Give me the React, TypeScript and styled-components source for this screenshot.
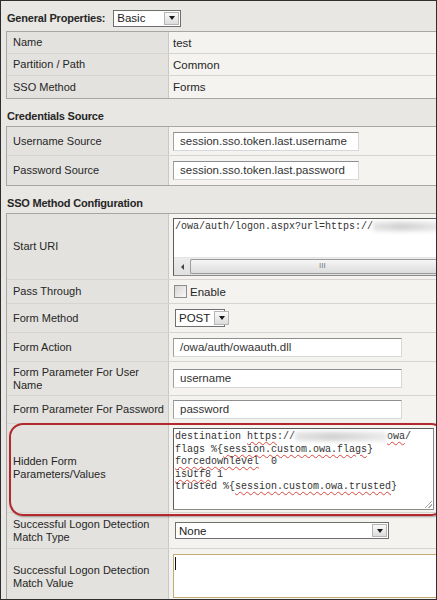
import styled, { createGlobalStyle } from "styled-components";

const GlobalStyle = createGlobalStyle`
    html, body {
        margin: 0;
        padding: 0;
        background: #e8e7e3;
    }
`;

const Frame = styled.div`
    width: 437px;
    height: 600px;
    box-sizing: border-box;
    border: 1px solid #2e2e2e;
    background: #e8e7e3;
    overflow: hidden;
    padding: 0 0 0 5px;
    font-family: "Liberation Sans", Arial, sans-serif;
    font-size: 11px;
    color: #262626;
`;

const TopBar = styled.div`
    display: flex;
    align-items: center;
    gap: 6px;
    height: 18px;
    margin: 8px 0 4px 1px;
    font-weight: bold;
    font-size: 11px;
    letter-spacing: -0.2px;
`;

const Heading = styled.div`
    font-weight: bold;
    line-height: 14px;
    letter-spacing: -0.2px;
    padding: 10px 0 3px 1px;
`;

const Table = styled.div`
    width: 429px;
    border: 1px solid #a7a6a3;
    position: relative;
`;

const Row = styled.div<{ $h: number }>`
    display: grid;
    grid-template-columns: 162px 1fr;
    height: ${(p) => p.$h}px;
    box-sizing: border-box;
    border-bottom: 1px solid #d6d5d1;

    &:last-child {
        border-bottom: none;
    }
`;

const Label = styled.div`
    display: flex;
    align-items: center;
    padding: 0 2px 0 6px;
    background: #e3e2de;
    border-right: 1px solid #c9c8c4;
    line-height: 13px;
    font-size: 11px;
`;

const Value = styled.div<{ $top?: number }>`
    display: flex;
    align-items: ${(p) => (p.$top !== undefined ? "flex-start" : "center")};
    padding: ${(p) => (p.$top !== undefined ? `${p.$top}px 0 0 4px` : "0 0 0 4px")};
    background: #f4f3f0;
    min-width: 0;
    overflow: hidden;
    font-size: 11.5px;
`;

const TextInput = styled.div<{ $w: number }>`
    width: ${(p) => p.$w}px;
    height: 19px;
    box-sizing: border-box;
    border: 1px solid #d8d8d8;
    border-top-color: #8e8e8e;
    border-left-color: #a0a0a0;
    background: #fff;
    padding: 0 6px;
    line-height: 17px;
    color: #333;
    white-space: nowrap;
`;

const SelectBox = styled.div<{ $w: number; $h: number }>`
    width: ${(p) => p.$w}px;
    height: ${(p) => p.$h}px;
    box-sizing: border-box;
    display: flex;
    align-items: stretch;
    border: 1px solid #6f6f6f;
    background: #fff;
    margin-left: 2px;
    font-weight: normal;
    letter-spacing: 0;
    color: #222;
`;

const SelectText = styled.span`
    flex: 1;
    padding: 0 3px;
    display: flex;
    align-items: center;
    font-size: 11.5px;
    white-space: nowrap;
`;

const SelectArrow = styled.span`
    width: 13px;
    flex-shrink: 0;
    margin: 1px;
    border: 1px solid #b5b5b5;
    background: linear-gradient(#fafafa, #dcdcdc);
    display: flex;
    align-items: center;
    justify-content: center;

    &::after {
        content: "";
        border-left: 3px solid transparent;
        border-right: 3px solid transparent;
        border-top: 4px solid #1a1a1a;
    }
`;

const MonoArea = styled.div<{ $w?: number; $h: number; $border?: string }>`
    width: ${(p) => (p.$w ? `${p.$w}px` : "calc(100% + 10px)")};
    height: ${(p) => p.$h}px;
    box-sizing: border-box;
    flex-shrink: 0;
    border: 1px solid ${(p) => p.$border ?? "#8a8a8a"};
    border-top-color: ${(p) => p.$border ?? "#5c5c5c"};
    border-left-color: ${(p) => p.$border ?? "#5c5c5c"};
    background: #fff;
    position: relative;
    font-family: "Liberation Mono", "Courier New", monospace;
    font-size: 10px;
    line-height: 12.5px;
    color: #333;
    padding: 2px 1px;
    white-space: pre;
    overflow: hidden;
`;

const Squiggle = styled.span`
    text-decoration: underline wavy #d9473f;
    text-decoration-thickness: 1px;
    text-underline-offset: 2px;
`;

const Redacted = styled.span<{ $w: number }>`
    display: inline-block;
    width: ${(p) => p.$w}px;
    height: 9px;
    vertical-align: middle;
    background: linear-gradient(90deg, #e4e4e4, #d2d2d2 40%, #dedede 70%, #ececec);
    filter: blur(2px);
`;

const HScroll = styled.div`
    position: absolute;
    left: 0;
    right: 0;
    bottom: 0;
    height: 17px;
    display: flex;
    background: linear-gradient(#ececec, #e0e0e0);
    border-top: 1px solid #e4e4e4;
`;

const ScrollButton = styled.div`
    width: 16px;
    display: flex;
    align-items: center;
    justify-content: center;

    &::after {
        content: "";
        border-top: 3px solid transparent;
        border-bottom: 3px solid transparent;
        border-right: 3px solid #444;
    }
`;

const ScrollThumb = styled.div`
    flex: 1;
    margin: 1px 0;
    border: 1px solid #9b9b9b;
    border-right: none;
    border-radius: 2px 0 0 2px;
    background: linear-gradient(#f6f6f6, #dcdcdc);
    display: flex;
    align-items: center;
    padding-left: 128px;
    font-family: "Liberation Sans", Arial, sans-serif;
    font-size: 8px;
    color: #777;
`;

const Check = styled.span`
    width: 11px;
    height: 11px;
    border: 1px solid #8d8d8d;
    background: linear-gradient(135deg, #d6d6d6, #f8f8f8);
    margin: 0 3px 0 1px;
`;

const Grip = styled.span`
    position: absolute;
    right: 1px;
    bottom: 1px;
    width: 8px;
    height: 8px;
    background: linear-gradient(135deg, transparent 55%, #aaa 55%, #aaa 62%, transparent 62%, transparent 75%, #aaa 75%, #aaa 82%, transparent 82%);
`;

const Highlight = styled.div`
    position: absolute;
    left: 2px;
    top: 209px;
    width: 432px;
    height: 89px;
    border: 2px solid #b3282c;
    border-radius: 14px;
    box-shadow: 1px 1px 2px rgba(0, 0, 0, 0.35);
    pointer-events: none;
`;

const Caret = styled.span`
    position: absolute;
    left: 1px;
    top: 2px;
    width: 1px;
    height: 13px;
    background: #111;
`;

const App = () => {
    return (
        <>
            <GlobalStyle />
            <Frame>
                <TopBar>
                    General Properties:
                    <SelectBox $w={68} $h={17}>
                        <SelectText>Basic</SelectText>
                        <SelectArrow />
                    </SelectBox>
                </TopBar>
                <Table>
                    <Row $h={22}>
                        <Label>Name</Label>
                        <Value>test</Value>
                    </Row>
                    <Row $h={22}>
                        <Label>Partition / Path</Label>
                        <Value>Common</Value>
                    </Row>
                    <Row $h={22}>
                        <Label>SSO Method</Label>
                        <Value>Forms</Value>
                    </Row>
                </Table>

                <Heading>Credentials Source</Heading>
                <Table>
                    <Row $h={29}>
                        <Label>Username Source</Label>
                        <Value>
                            <TextInput $w={186}>session.sso.token.last.username</TextInput>
                        </Value>
                    </Row>
                    <Row $h={29}>
                        <Label>Password Source</Label>
                        <Value>
                            <TextInput $w={186}>session.sso.token.last.password</TextInput>
                        </Value>
                    </Row>
                </Table>

                <Heading>SSO Method Configuration</Heading>
                <Table>
                    <Row $h={66}>
                        <Label>Start URI</Label>
                        <Value $top={4}>
                            <MonoArea $h={58}>
                                /owa/auth/logon.aspx?url=https://<Redacted $w={70} />
                                <HScroll>
                                    <ScrollButton />
                                    <ScrollThumb>III</ScrollThumb>
                                </HScroll>
                            </MonoArea>
                        </Value>
                    </Row>
                    <Row $h={24}>
                        <Label>Pass Through</Label>
                        <Value>
                            <Check />
                            Enable
                        </Value>
                    </Row>
                    <Row $h={29}>
                        <Label>Form Method</Label>
                        <Value>
                            <SelectBox $w={50} $h={18}>
                                <SelectText>POST</SelectText>
                                <SelectArrow />
                            </SelectBox>
                        </Value>
                    </Row>
                    <Row $h={29}>
                        <Label>Form Action</Label>
                        <Value>
                            <TextInput $w={229}>/owa/auth/owaauth.dll</TextInput>
                        </Value>
                    </Row>
                    <Row $h={34}>
                        <Label>Form Parameter For User Name</Label>
                        <Value>
                            <TextInput $w={229}>username</TextInput>
                        </Value>
                    </Row>
                    <Row $h={28}>
                        <Label>Form Parameter For Password</Label>
                        <Value>
                            <TextInput $w={229}>password</TextInput>
                        </Value>
                    </Row>
                    <Row $h={89}>
                        <Label>Hidden Form Parameters/Values</Label>
                        <Value $top={4}>
                            <MonoArea $w={261} $h={82}>
                                {"destination "}
                                <Squiggle>https</Squiggle>://<Redacted $w={92} />
                                <Squiggle>owa</Squiggle>/{"\n"}
                                {"flags %{"}
                                <Squiggle>session.custom.owa.flags</Squiggle>
                                {"}\n"}
                                <Squiggle>forcedownlevel</Squiggle>
                                {"  0\n"}
                                <Squiggle>isUtf8</Squiggle>
                                {" 1\n"}
                                {"trusted %{"}
                                <Squiggle>session.custom.owa.trusted</Squiggle>
                                {"}"}
                                <Grip />
                            </MonoArea>
                        </Value>
                    </Row>
                    <Row $h={36}>
                        <Label>Successful Logon Detection Match Type</Label>
                        <Value>
                            <SelectBox $w={214} $h={17}>
                                <SelectText>None</SelectText>
                                <SelectArrow />
                            </SelectBox>
                        </Value>
                    </Row>
                    <Row $h={56}>
                        <Label>Successful Logon Detection Match Value</Label>
                        <Value $top={5}>
                            <MonoArea $h={44} $border="#c4ab74">
                                <Caret />
                            </MonoArea>
                        </Value>
                    </Row>
                    <Highlight />
                </Table>
            </Frame>
        </>
    );
};

export default App;
